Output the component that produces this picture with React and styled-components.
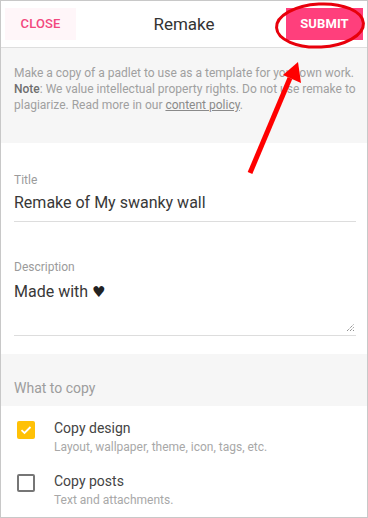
import React from "react";
import styled, { createGlobalStyle } from "styled-components";

const Global = createGlobalStyle`
  html, body { margin: 0; padding: 0; background: #fff; }
  body { font-family: Roboto, "Noto Sans", "Liberation Sans", sans-serif; -webkit-font-smoothing: antialiased; }
  * { box-sizing: border-box; }
`;

const Frame = styled.div`
  position: relative;
  width: 368px;
  height: 518px;
  border: 1px solid #c8c8c8;
  display: flex;
  flex-direction: column;
  overflow: hidden;
  background: #fff;
`;

const Header = styled.header`
  height: 47px;
  flex: none;
  display: grid;
  grid-template-columns: 1fr auto 1fr;
  align-items: center;
  padding: 0 4px;
  border-bottom: 1px solid #dedede;
`;

const Button = styled.button`
  height: 32px;
  width: ${(p) => p.$w}px;
  border: none;
  border-radius: 0;
  font-family: inherit;
  font-size: 13px;
  font-weight: ${(p) => (p.$primary ? 700 : 500)};
  letter-spacing: 0.1px;
  text-transform: uppercase;
  color: ${(p) => (p.$primary ? "#fff" : "#f2487e")};
  background: ${(p) => (p.$primary ? "#ff3f7c" : "#fff6f9")};
  justify-self: ${(p) => (p.$primary ? "end" : "start")};
  margin-top: -1px;
  cursor: pointer;
`;

const Heading = styled.h1`
  margin: 0;
  font-size: 17px;
  font-weight: 400;
  color: #333;
`;

const Info = styled.section`
  flex: none;
  height: 95px;
  background: #f6f6f6;
  padding: 17px 10px 0 13px;
  font-size: 12px;
  line-height: 16px;
  color: #a0a0a0;
  white-space: nowrap;
  b { color: #6e6e6e; font-weight: 500; }
  a { color: #8a8a8a; text-decoration: underline; }
`;

const Fields = styled.section`
  flex: none;
  padding: 30px 11px 0 13px;
  height: 211px;
  display: flex;
  flex-direction: column;
`;

const Field = styled.label`
  display: flex;
  flex-direction: column;
  border-bottom: 1px solid #dddddd;
  margin-bottom: ${(p) => p.$mb || 0}px;
  position: relative;
`;

const FieldLabel = styled.span`
  font-size: 12px;
  line-height: 14px;
  color: #9b9b9b;
`;

const FieldValue = styled.span`
  font-size: 16px;
  line-height: 20px;
  color: #383838;
  margin-top: ${(p) => p.$mt}px;
  height: ${(p) => p.$h}px;
`;

const Resize = styled.svg`
  position: absolute;
  right: 1px;
  bottom: 3px;
`;

const SectionHead = styled.div`
  flex: none;
  height: 52px;
  background: #f6f6f6;
  padding: 26px 13px 0;
  font-size: 14px;
  line-height: 16px;
  color: #9d9d9d;
`;

const Options = styled.div`
  display: flex;
  flex-direction: column;
  gap: 19px;
  padding: 15px 13px 0 16px;
`;

const Option = styled.div`
  display: flex;
  align-items: flex-start;
  gap: 19px;
`;

const Box = styled.span`
  width: 18px;
  height: 18px;
  border-radius: 2px;
  flex: none;
  display: flex;
  align-items: center;
  justify-content: center;
  background: ${(p) => (p.$checked ? "#ffc107" : "#fff")};
  border: ${(p) => (p.$checked ? "none" : "2px solid #767676")};
`;

const OptText = styled.div`
  display: flex;
  flex-direction: column;
  margin-top: -2px;
`;

const OptTitle = styled.span`
  font-size: 14px;
  line-height: 18px;
  color: #444;
`;

const OptSub = styled.span`
  font-size: 12px;
  line-height: 15px;
  margin-top: 3px;
  color: #a8a8a8;
`;

const Heart = styled.span`
  font-family: "DejaVu Sans", sans-serif;
  font-size: 15px;
  color: #222;
`;

const Annotation = styled.svg`
  position: absolute;
  left: -1px;
  top: -1px;
  pointer-events: none;
`;

export default function App() {
  return (
    <>
      <Global />
      <Frame>
        <Header>
          <Button $w={71}>Close</Button>
          <Heading>Remake</Heading>
          <Button $w={77} $primary>Submit</Button>
        </Header>
        <Info>
          Make a copy of a padlet to use as a template for your own work.
          <br />
          <b>Note</b>: We value intellectual property rights. Do not use remake to
          <br />
          plagiarize. Read more in our <a>content policy</a>.
        </Info>
        <Fields>
          <Field $mb={38}>
            <FieldLabel>Title</FieldLabel>
            <FieldValue $mt={6} $h={28}>Remake of My swanky wall</FieldValue>
          </Field>
          <Field>
            <FieldLabel>Description</FieldLabel>
            <FieldValue $mt={8} $h={53}>
              Made with <Heart>♥</Heart>
            </FieldValue>
            <Resize width="9" height="9" viewBox="0 0 9 9">
              <path d="M1 8 L8 1 M4 8 L8 4 M7 8 L8 7" stroke="#555" strokeWidth="0.9" strokeDasharray="1 1" fill="none" />
            </Resize>
          </Field>
        </Fields>
        <SectionHead>What to copy</SectionHead>
        <Options>
          <Option>
            <Box $checked>
              <svg width="12" height="10" viewBox="0 0 12 10">
                <path d="M1.5 5.2 L4.5 8 L10.5 2" stroke="#fff" strokeWidth="1.8" fill="none" />
              </svg>
            </Box>
            <OptText>
              <OptTitle>Copy design</OptTitle>
              <OptSub>Layout, wallpaper, theme, icon, tags, etc.</OptSub>
            </OptText>
          </Option>
          <Option>
            <Box />
            <OptText>
              <OptTitle>Copy posts</OptTitle>
              <OptSub>Text and attachments.</OptSub>
            </OptText>
          </Option>
        </Options>
        <Annotation width="368" height="518" viewBox="0 0 368 518">
          <ellipse cx="320" cy="25.5" rx="43.5" ry="21.5" fill="none" stroke="#e8000b" strokeWidth="3" transform="rotate(-3 320 25.5)" />
          <line x1="250" y1="173" x2="290" y2="78" stroke="#ff0000" strokeWidth="5" />
          <polygon points="298,62 283,75 301,83" fill="#ff0000" />
        </Annotation>
      </Frame>
    </>
  );
}
